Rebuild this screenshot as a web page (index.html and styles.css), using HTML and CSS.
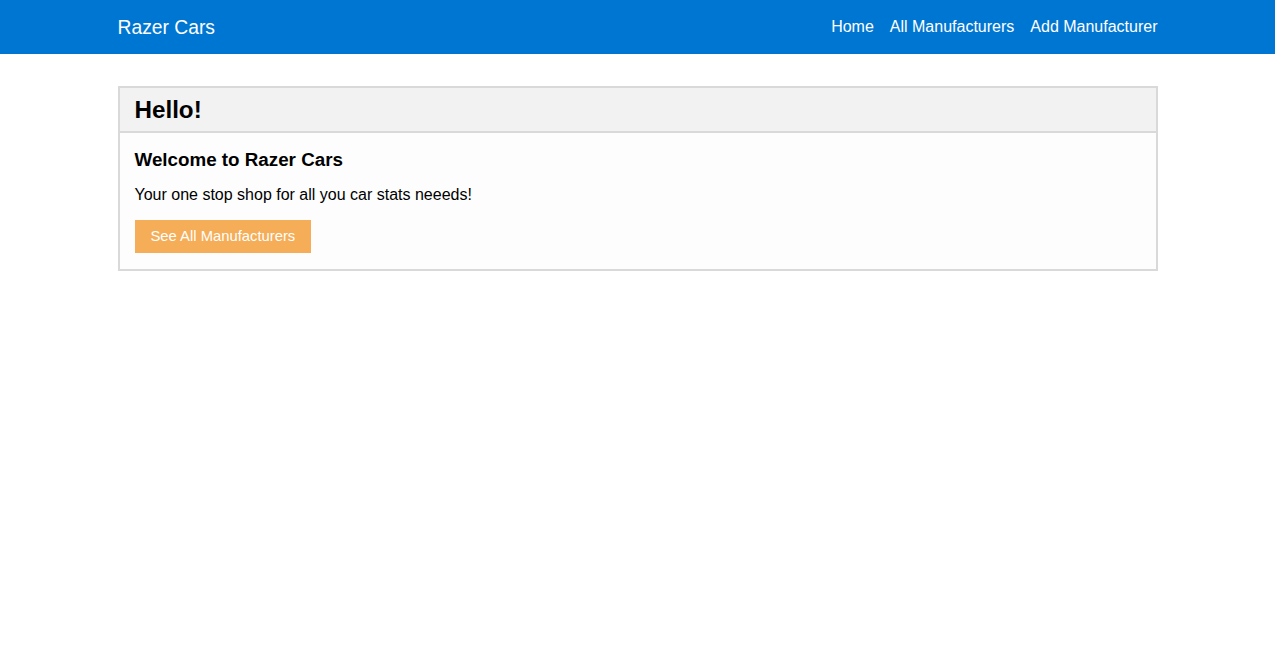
FILE: index.html
```html
<!DOCTYPE html>
<html lang="en">
<head>
<meta charset="utf-8">
<title>Razer Cars</title>
<link rel="stylesheet" href="styles.css">
</head>
<body>
<header class="navbar">
  <div class="container nav-inner">
    <a class="brand" href="#">Razer Cars</a>
    <nav class="nav-links">
      <a href="#">Home</a>
      <a href="#">All Manufacturers</a>
      <a href="#">Add Manufacturer</a>
    </nav>
  </div>
</header>
<main class="container main">
  <section class="card">
    <div class="card-header"><h1>Hello!</h1></div>
    <div class="card-body">
      <h2>Welcome to Razer Cars</h2>
      <p>Your one stop shop for all you car stats neeeds!</p>
      <a class="btn" href="#">See All Manufacturers</a>
    </div>
  </section>
</main>
</body>
</html>
```

FILE: styles.css
```css
* { box-sizing: border-box; }
html, body { margin: 0; padding: 0; }
body {
  font-family: "Liberation Sans", Arial, Helvetica, sans-serif;
  color: #000;
  background: #fff;
}
a { text-decoration: none; }
.container {
  width: 1040px;
  margin: 0 auto;
}
.navbar {
  background: #0076d3;
  height: 54px;
}
.nav-inner {
  display: flex;
  align-items: center;
  justify-content: space-between;
  height: 54px;
}
.brand {
  color: #fff;
  font-size: 19.3px;
  line-height: 24px;
  margin-top: 2px;
}
.nav-links {
  display: flex;
  gap: 16px;
}
.nav-links a {
  color: #fff;
  font-size: 16px;
  line-height: 20px;
}
.main { padding-top: 32px; }
.card {
  border: 2px solid #d9d9d9;
}
.card-header {
  background: #f2f2f2;
  border-bottom: 2px solid #d9d9d9;
  height: 45px;
  padding: 0 15px;
  display: flex;
  align-items: center;
}
.card-header h1 {
  margin: 0;
  font-size: 24.2px;
  font-weight: bold;
  line-height: 28px;
}
.card-body {
  background: #fdfdfd;
  padding: 16px 15px 16px;
}
.card-body h2 {
  margin: 0 0 13px;
  font-size: 18.8px;
  font-weight: bold;
  line-height: 22px;
}
.card-body p {
  margin: 0 0 15px;
  font-size: 16px;
  line-height: 21px;
}
.btn {
  display: inline-block;
  background: #f5ad57;
  color: #fff;
  font-size: 14.8px;
  line-height: 33px;
  height: 33px;
  padding: 0 16px;
  vertical-align: top;
}
```
